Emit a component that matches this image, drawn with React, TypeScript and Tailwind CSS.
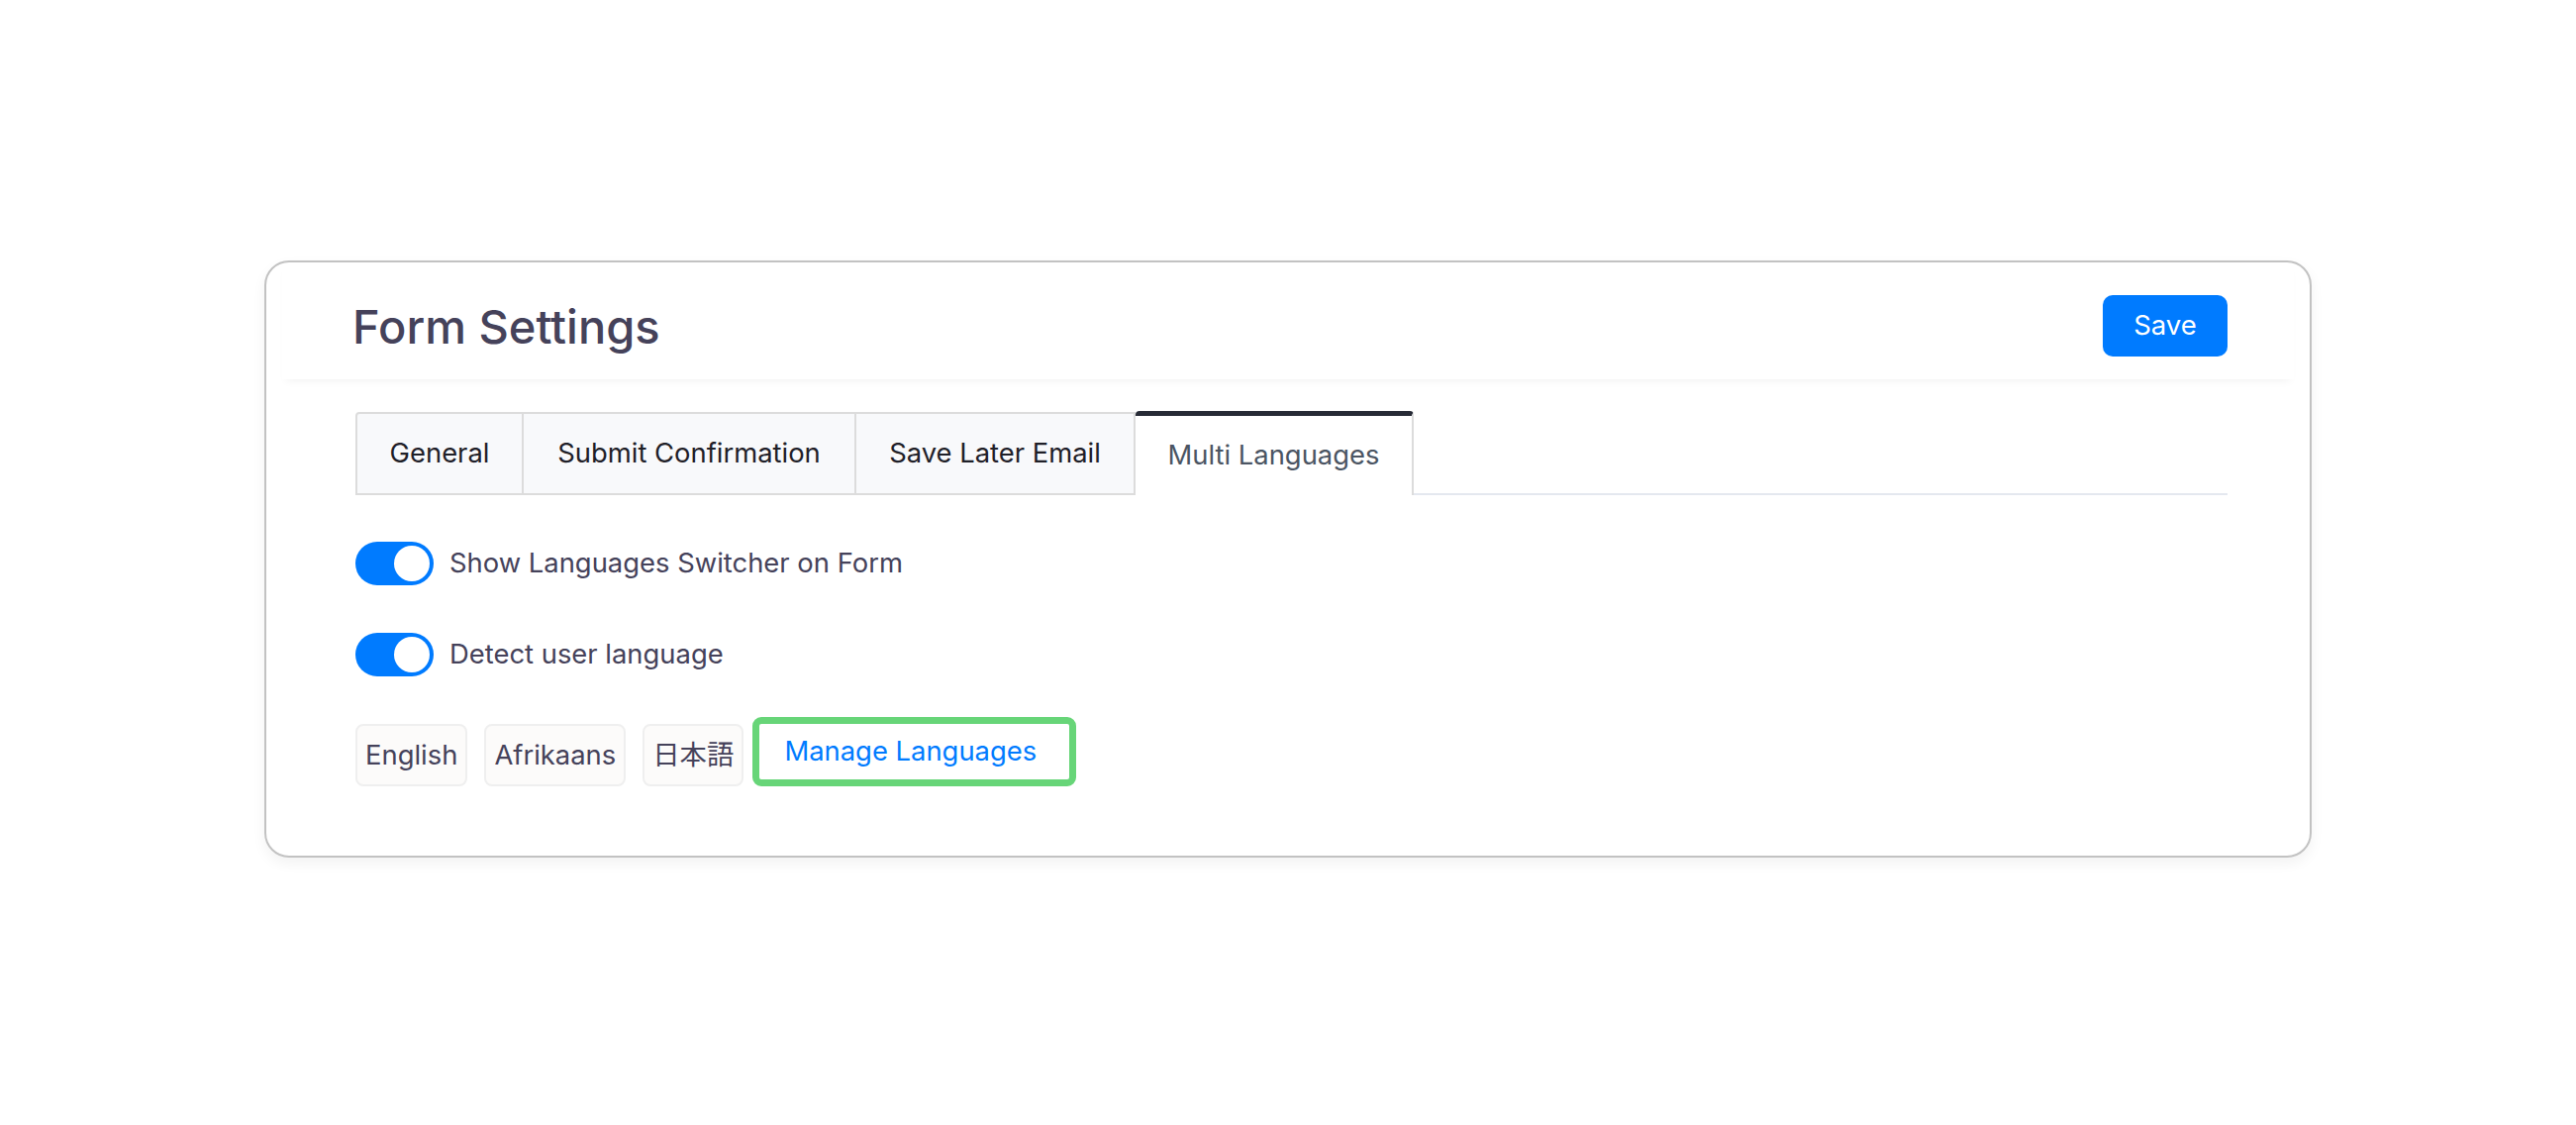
import React from 'react'

const font = { fontFamily: 'Inter, "Noto Sans CJK JP", sans-serif' }

interface TabItem {
  label: string
  width: string
  active?: boolean
}

const tabs: TabItem[] = [
  { label: 'General', width: 'w-[170px] border-l-2' },
  { label: 'Submit Confirmation', width: 'w-[336px]' },
  { label: 'Save Later Email', width: 'w-[282px]' },
  { label: 'Multi Languages', width: 'w-[281px]', active: true },
]

function Toggle({ on = true }: { on?: boolean }) {
  return (
    <div
      className={`w-[79px] h-[44px] rounded-full flex items-center px-[4px] ${
        on ? 'bg-[#007bff] justify-end' : 'bg-gray-300 justify-start'
      }`}
    >
      <div className="w-[36px] h-[36px] rounded-full bg-white" />
    </div>
  )
}

export default function App() {
  return (
    <div className="min-h-screen bg-white pt-[263px]" style={font}>
      <div className="mx-auto w-[2068px] rounded-[25px] border-2 border-[#c2c2c2] bg-white px-[16px] shadow-[0_6px_14px_rgba(0,0,0,0.05)]">
        {/* header */}
        <div className="flex items-center justify-between pl-[74px] pr-[67px] pt-[33px] pb-[23px] shadow-[0_6px_8px_-4px_rgba(0,0,0,0.05)]">
          <h1 className="-ml-[3px] text-[47px] leading-none font-medium text-[#45425a]">Form Settings</h1>
          <button className="w-[126px] h-[62px] rounded-[10px] bg-[#007bff] text-white text-[27.5px]">
            Save
          </button>
        </div>

        <div className="pl-[74px] pr-[67px] pt-[32px] pb-[70px] text-[27.4px]">
          {/* tabs */}
          <div className="flex items-end border-b-2 border-[#e4e8ef]">
            {tabs.map((tab) =>
              tab.active ? (
                <div
                  key={tab.label}
                  className={`${tab.width} h-[85px] -mb-[2px] flex items-center justify-center bg-white border-t-[5px] border-t-[#272b36] border-r-2 border-r-[#dcdcdc] rounded-t-[4px] text-[#4b5563]`}
                >
                  {tab.label}
                </div>
              ) : (
                <div
                  key={tab.label}
                  className={`${tab.width} h-[84px] -mb-[2px] flex items-center justify-center bg-[#f8f9fb] border-t-2 border-r-2 border-b-2 border-[#dcdcdc] first:rounded-tl-[4px] text-[#1f2028]`}
                >
                  {tab.label}
                </div>
              )
            )}
          </div>

          {/* switches */}
          <div className="mt-[47px] flex flex-col gap-[48px]">
            <div className="flex items-center gap-[16px]">
              <Toggle />
              <span className="text-[#45425a]">Show Languages Switcher on Form</span>
            </div>
            <div className="flex items-center gap-[16px]">
              <Toggle />
              <span className="text-[#45425a]">Detect user language</span>
            </div>
          </div>

          {/* languages */}
          <div className="mt-[41px] flex items-end">
            <div className="flex items-end gap-[17px]">
              {['English', 'Afrikaans', '日本語'].map((lang) => (
                <div
                  key={lang}
                  className="h-[63px] px-[8px] flex items-center rounded-[8px] border-2 border-[#efefef] bg-[#fcfbfa] text-[#45425a]"
                >
                  {lang}
                </div>
              ))}
            </div>
            <button className="ml-[9px] w-[327px] h-[70px] pl-[25px] flex items-center rounded-[9px] border-[7px] border-[#67d578] bg-white text-[#007bff]">
              Manage Languages
            </button>
          </div>
        </div>
      </div>
    </div>
  )
}
